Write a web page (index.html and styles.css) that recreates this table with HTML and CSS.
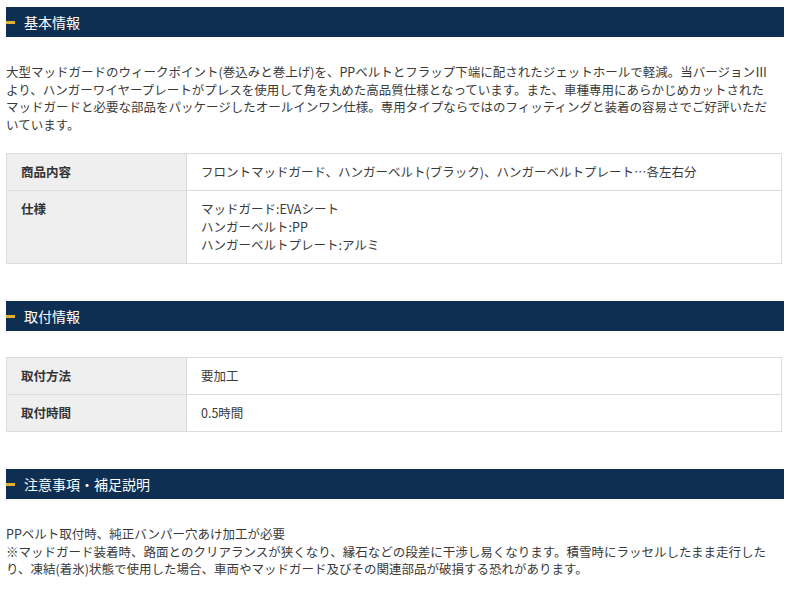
FILE: index.html
```html
<!DOCTYPE html>
<html lang="ja">
<head>
    <meta charset="UTF-8">
    <title>商品詳細</title>
    <link rel="stylesheet" href="styles.css">
</head>
<body>
<div class="item-detail">

    <section class="item-section">
        <h2 class="item-heading">基本情報</h2>
        <p class="item-text">大型マッドガードのウィークポイント(巻込みと巻上げ)を、PPベルトとフラップ下端に配されたジェットホールで軽減。当バージョンⅢより、ハンガーワイヤープレートがプレスを使用して角を丸めた高品質仕様となっています。また、車種専用にあらかじめカットされたマッドガードと必要な部品をパッケージしたオールインワン仕様。専用タイプならではのフィッティングと装着の容易さでご好評いただいています。</p>
        <table class="item-spec">
            <tr>
                <th>商品内容</th>
                <td>フロントマッドガード、ハンガーベルト(ブラック)、ハンガーベルトプレート…各左右分</td>
            </tr>
            <tr>
                <th>仕様</th>
                <td>マッドガード:EVAシート<br>ハンガーベルト:PP<br>ハンガーベルトプレート:アルミ</td>
            </tr>
        </table>
    </section>

    <section class="item-section">
        <h2 class="item-heading">取付情報</h2>
        <table class="item-spec">
            <tr>
                <th>取付方法</th>
                <td>要加工</td>
            </tr>
            <tr>
                <th>取付時間</th>
                <td>0.5時間</td>
            </tr>
        </table>
    </section>

    <section class="item-section">
        <h2 class="item-heading">注意事項・補足説明</h2>
        <p class="item-text">PPベルト取付時、純正バンパー穴あけ加工が必要<br>※マッドガード装着時、路面とのクリアランスが狭くなり、縁石などの段差に干渉し易くなります。積雪時にラッセルしたまま走行したり、凍結(着氷)状態で使用した場合、車両やマッドガード及びその関連部品が破損する恐れがあります。</p>
    </section>

</div>
</body>
</html>
```

FILE: styles.css
```css
body {
    margin: 0;
    background: #fff;
    color: #3a3a3a;
    font-family: "Noto Sans CJK JP", "Noto Sans", sans-serif;
    font-size: 12.5px;
    line-height: 17.5px;
}

.item-detail {
    width: 778px;
    padding: 7px 6px 0;
}

.item-section {
    margin-bottom: 37px;
}

.item-section:last-child {
    margin-bottom: 0;
}

.item-heading {
    position: relative;
    margin: 0 0 26px;
    height: 30px;
    padding-left: 18px;
    background: #0f2f52;
    color: #fff;
    font-size: 14px;
    font-weight: normal;
    line-height: 30px;
}

.item-heading::before {
    content: "";
    position: absolute;
    left: 0;
    top: 14px;
    width: 9px;
    height: 3px;
    background: #e2b030;
}

.item-text {
    margin: 0 0 20px;
    padding-right: 8px;
}

.item-section:last-child .item-text {
    margin-bottom: 0;
}

.item-spec {
    width: 776px;
    border-collapse: collapse;
}

.item-spec th,
.item-spec td {
    border: 1px solid #dcdcdc;
    padding: 9px 14px;
    line-height: 18px;
    text-align: left;
    vertical-align: top;
}

.item-spec th {
    width: 151px;
    background: #efefef;
    font-weight: bold;
    color: #333;
}

.item-spec td {
    background: #fff;
}
```
